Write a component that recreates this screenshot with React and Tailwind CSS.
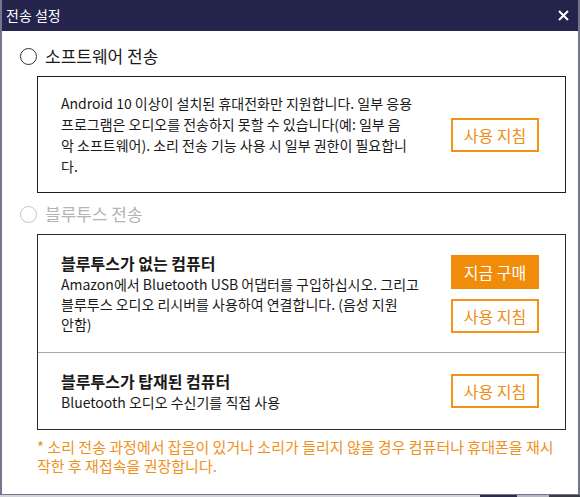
import React from "react";

function GuideButton({ filled, label }) {
  return (
    <button
      className={
        filled
          ? "w-[88px] h-[34px] bg-[#f08c0a] text-white text-[16px] flex items-center justify-center"
          : "w-[88px] h-[34px] border-2 border-[#f29419] bg-white text-[#f08c14] text-[16px] flex items-center justify-center"
      }
    >
      {label}
    </button>
  );
}

function Radio({ label, disabled }) {
  return (
    <div className="h-[30px] flex items-center pl-[18px] gap-[8px]">
      <span
        className={
          disabled
            ? "w-[17px] h-[17px] rounded-full border border-[#c4c4c4]"
            : "w-[17px] h-[17px] rounded-full border border-[#333]"
        }
      />
      <span className={disabled ? "text-[17px] text-[#b4b4b4]" : "text-[17px] text-[#1a1a1a]"}>
        {label}
      </span>
    </div>
  );
}

export default function App() {
  return (
    <div className="w-[580px] h-[497px] bg-[#cfcfd6] flex flex-col font-['Noto_Sans_CJK_KR','Noto_Sans',sans-serif]">
      <div className="h-[495px] border-x-2 border-b border-[#76768a] bg-white flex flex-col">
        {/* title bar */}
        <div className="h-[31px] shrink-0 bg-[#24244d] flex items-center justify-between pl-[4px] pr-[9px]">
          <span className="text-white text-[14px]">전송 설정</span>
          <svg width="11" height="11" viewBox="0 0 11 11">
            <path d="M1 1 L10 10 M10 1 L1 10" stroke="#fff" strokeWidth="2" />
          </svg>
        </div>

        <div className="mt-[10px]">
          <Radio label="소프트웨어 전송" />
        </div>

        <div className="mt-[5px] ml-[35px] w-[529px] h-[117px] border border-[#1e1e1e] flex items-center justify-between pl-[23px] pr-[26px]">
          <div className="text-[14px] leading-[21px] text-[#1a1a1a]">
            <div>Android 10 이상이 설치된 휴대전화만 지원합니다. 일부 응용</div>
            <div>프로그램은 오디오를 전송하지 못할 수 있습니다(예: 일부 음</div>
            <div>악 소프트웨어). 소리 전송 기능 사용 시 일부 권한이 필요합니</div>
            <div>다.</div>
          </div>
          <GuideButton label="사용 지침" />
        </div>

        <div className="mt-[6px]">
          <Radio label="블루투스 전송" disabled />
        </div>

        <div className="mt-[5px] ml-[35px] w-[529px] border border-[#2a2a2a]">
          <div className="h-[117px] flex items-center justify-between pl-[23px] pr-[26px]">
            <div className="text-[14px] leading-[20px] text-[#1a1a1a]">
              <div className="text-[16px] font-bold mb-[1px]">블루투스가 없는 컴퓨터</div>
              <div>Amazon에서 Bluetooth USB 어댑터를 구입하십시오. 그리고</div>
              <div>블루투스 오디오 리시버를 사용하여 연결합니다. (음성 지원</div>
              <div>안함)</div>
            </div>
            <div className="flex flex-col gap-[10px]">
              <GuideButton filled label="지금 구매" />
              <GuideButton label="사용 지침" />
            </div>
          </div>
          <div className="h-px bg-[#a8a8a8]" />
          <div className="h-[76px] flex items-center justify-between pl-[23px] pr-[26px]">
            <div className="text-[14px] leading-[20px] text-[#1a1a1a]">
              <div className="text-[16px] font-bold mb-[1px]">블루투스가 탑재된 컴퓨터</div>
              <div>Bluetooth 오디오 수신기를 직접 사용</div>
            </div>
            <GuideButton label="사용 지침" />
          </div>
        </div>

        <div className="mt-[7px] ml-[35px] text-[15px] leading-[19px] text-[#f0901c]">
          <div>* 소리 전송 과정에서 잡음이 있거나 소리가 들리지 않을 경우 컴퓨터나 휴대폰을 재시</div>
          <div>작한 후 재접속을 권장합니다.</div>
        </div>
      </div>
      <div className="h-[2px] flex">
        <div className="w-[480px] bg-[#d4d4dc]" />
        <div className="w-[37px] bg-[#2a2a4a]" />
        <div className="w-[32px] bg-[#b8b8c4]" />
        <div className="flex-1 bg-[#3a3a44]" />
      </div>
    </div>
  );
}
